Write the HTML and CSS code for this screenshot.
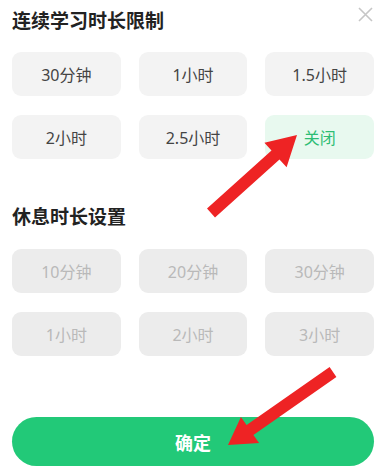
FILE: index.html
```html
<!DOCTYPE html>
<html lang="zh">
<head>
<meta charset="utf-8">
<link rel="stylesheet" href="styles.css">
</head>
<body>
<div class="sheet">
  <div class="head">
    <h2 class="title">连续学习时长限制</h2>
    <svg class="close" width="15" height="15" viewBox="0 0 15 15"><path d="M1 1L14 14M14 1L1 14" stroke="#c6c6c6" stroke-width="1.6" fill="none"/></svg>
  </div>
  <div class="grid first">
    <div class="opt">30分钟</div>
    <div class="opt">1小时</div>
    <div class="opt">1.5小时</div>
    <div class="opt">2小时</div>
    <div class="opt">2.5小时</div>
    <div class="opt on">关闭</div>
  </div>
  <h2 class="title second">休息时长设置</h2>
  <div class="grid rest">
    <div class="opt off">10分钟</div>
    <div class="opt off">20分钟</div>
    <div class="opt off">30分钟</div>
    <div class="opt off">1小时</div>
    <div class="opt off">2小时</div>
    <div class="opt off">3小时</div>
  </div>
  <button class="confirm">确定</button>
</div>
<svg class="arrows" width="378" height="471" viewBox="0 0 378 471">
  <polygon fill="#ee2324" points="207,208.6 271.5,150.6 264.4,142.8 297,135 286.6,167.2 279.5,159.4 215,217.4"/>
  <polygon fill="#ee2324" points="329.6,367.1 246.6,425.1 240.9,416.9 228,445 259.1,443.1 253.4,434.9 336.4,376.9"/>
</svg>
</body>
</html>
```
FILE: styles.css
```css
html, body {
  margin: 0;
  padding: 0;
  background: #ffffff;
}
body {
  width: 378px;
  height: 471px;
  overflow: hidden;
  position: relative;
  font-family: "Noto Sans", "Noto Sans CJK SC", sans-serif;
}
.sheet {
  padding: 7px 4px 0 12px;
  display: flex;
  flex-direction: column;
}
.head {
  display: flex;
  justify-content: space-between;
  align-items: flex-start;
}
.title {
  margin: 0;
  font-size: 19px;
  line-height: 28px;
  font-weight: 700;
  color: #222222;
}
.close {
  margin-right: 1px;
  display: block;
}
.grid {
  display: grid;
  grid-template-columns: repeat(3, 1fr);
  column-gap: 18px;
  row-gap: 19px;
}
.first {
  margin-top: 17px;
}
.second {
  margin-top: 44px;
}
.rest {
  margin-top: 18px;
}
.opt {
  height: 44px;
  border-radius: 9px;
  background: #f3f3f3;
  color: #444444;
  font-size: 16px;
  display: flex;
  align-items: center;
  justify-content: center;
}
.opt.on {
  background: #e8f9ef;
  color: #2dbd74;
}
.opt.off {
  background: #ececec;
  color: #b9b9b9;
}
.confirm {
  margin-top: 61px;
  height: 49px;
  border: none;
  border-radius: 25px;
  background: #22c978;
  color: #ffffff;
  font-family: "Noto Sans", "Noto Sans CJK SC", sans-serif;
  font-size: 18px;
  font-weight: 700;
  padding: 0;
}
.arrows {
  position: absolute;
  left: 0;
  top: 0;
  pointer-events: none;
}
```
